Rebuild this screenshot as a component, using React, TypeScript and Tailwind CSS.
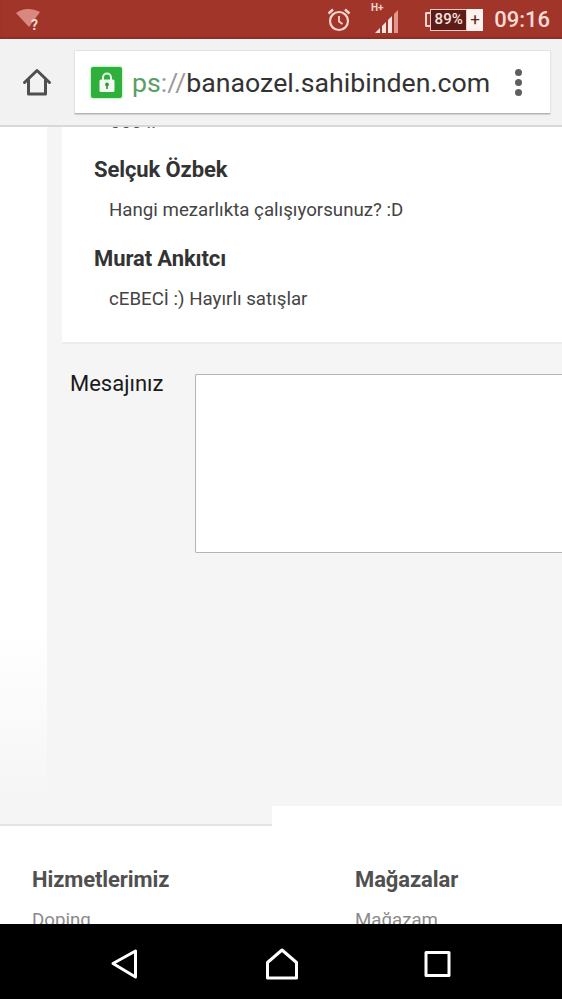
import React from "react";

const font = { fontFamily: "Roboto, sans-serif" };

function Wifi() {
  return (
    <svg width="30" height="24" viewBox="0 0 30 24" className="shrink-0">
      <path d="M2 5 C9 0 18 0 26 4 L15 19 Z" fill="#d98880" />
      <text x="17" y="22" fontSize="14" fontWeight="700" fill="#f8d9d4" fontFamily="Roboto, sans-serif">?</text>
    </svg>
  );
}

function Alarm() {
  return (
    <svg width="26" height="26" viewBox="0 0 26 26" fill="none" stroke="#f9d5cf" strokeWidth="2.2">
      <circle cx="13" cy="14" r="9" />
      <path d="M13 9v5.5l3.5 2.5" strokeWidth="1.8" />
      <path d="M2.5 6.5 7 2.5M23.5 6.5 19 2.5" strokeWidth="2.4" />
    </svg>
  );
}

function Signal() {
  return (
    <svg width="34" height="32" viewBox="0 0 34 32">
      <text x="3" y="9" fontSize="10" fontWeight="700" fill="#f9d5cf" fontFamily="Roboto, sans-serif">H+</text>
      <path d="M7 31 L12 26 V31 Z" fill="#fbe3df" />
      <path d="M14 24 L18 20 V31 H14 Z" fill="#fbe3df" />
      <path d="M20 18 L24 14 V31 H20 Z" fill="#fbe3df" />
      <path d="M26 12 L30 8 V31 H26 Z" fill="#e2978d" />
    </svg>
  );
}

function Battery() {
  return (
    <div className="flex items-center h-[22px]">
      <div className="w-[5px] h-[15px] border-l-2 border-t-2 border-b-2 border-[#f9d5cf] rounded-l-[2px]" />
      <div className="w-[37px] h-[22px] bg-[#5c1d18] border border-[#f3c8c1] flex items-center justify-center text-[15px] font-medium text-[#fbe3df] leading-none">
        89%
      </div>
      <div className="w-[16px] h-[22px] bg-[#fff3f0] flex items-center justify-center text-[17px] text-[#5c1d18] leading-none">+</div>
    </div>
  );
}

function HomeIcon() {
  return (
    <svg width="30" height="30" viewBox="0 0 30 30" fill="none" stroke="#4f4f4f" strokeWidth="3" strokeLinejoin="round" strokeLinecap="round">
      <path d="M2.5 15.5 15 3.5 27.5 15.5" />
      <path d="M6.5 13v14h17V13" />
    </svg>
  );
}

function Lock() {
  return (
    <div className="w-[31px] h-[31px] rounded-[2px] bg-[#2fb03c] shadow-[0_0_3px_#7fdc85] flex items-center justify-center shrink-0">
      <svg width="18" height="22" viewBox="0 0 18 22">
        <path d="M5 9V6.5a4 4 0 0 1 8 0V9" fill="none" stroke="#e8f7e8" strokeWidth="2" />
        <rect x="1.5" y="8.5" width="15" height="12.5" rx="1.5" fill="#f1faf1" />
        <circle cx="9" cy="13.5" r="1.9" fill="#3a8f44" />
        <rect x="8.2" y="14" width="1.6" height="4" fill="#3a8f44" />
      </svg>
    </div>
  );
}

export default function App() {
  return (
    <div className="w-[562px] h-[999px] overflow-hidden flex flex-col bg-white relative" style={font}>
      <div className="h-[39px] shrink-0 bg-[#a2352a] shadow-[inset_0_-2px_2px_#8f2e25] flex items-center pl-[14px] pr-[12px]">
        <Wifi />
        <div className="ml-auto flex items-center">
          <Alarm />
          <div className="ml-[16px] mr-[23px] -mt-[3px]"><Signal /></div>
          <Battery />
          <span className="ml-[11px] text-[22px] font-medium text-[#fbdcd6] leading-none">09:16</span>
        </div>
      </div>

      <div className="h-[88px] shrink-0 bg-[#f2f2f2] border-b-2 border-[#d8d8d8] flex items-center pl-[22px] pr-[11px]">
        <HomeIcon />
        <div className="ml-[22px] flex-1 h-[64px] bg-white rounded-[2px] border border-[#e3e3e3] border-b-[#b5b5b5] shadow-[0_1px_1px_#cfcfcf] flex items-center pl-[16px] pr-[28px]">
          <Lock />
          <span className="ml-[10px] mt-[3px] text-[26.7px] leading-none whitespace-nowrap">
            <span className="text-[#5a9e66]">ps</span>
            <span className="text-[#9a9a9a]">://</span>
            <span className="text-[#333333]">banaozel.sahibinden.com</span>
          </span>
          <div className="ml-auto flex flex-col gap-[3px]">
            <span className="w-[7px] h-[7px] rounded-full bg-[#5f5f5f]" />
            <span className="w-[7px] h-[7px] rounded-full bg-[#5f5f5f]" />
            <span className="w-[7px] h-[7px] rounded-full bg-[#5f5f5f]" />
          </div>
        </div>
      </div>

      <div className="flex-1 min-h-0 flex flex-col">
        <div className="h-[679px] shrink-0 flex">
          <div className="w-[47px] shrink-0 bg-gradient-to-b from-white from-[74%] to-[#f5f5f5]" />
          <div className="flex-1 bg-[#f5f5f5] flex flex-col">
            <div className="ml-[15px] h-[217px] shrink-0 bg-white border-b-2 border-[#ededed] pl-[32px] overflow-hidden">
              <div className="h-[5px] ml-[16px] overflow-hidden text-[18.7px] leading-none text-[#555555] flex items-end">ooo ıı</div>
              <div className="mt-[23px] text-[22px] font-bold text-[#333333] leading-[30px] tracking-[-0.1px]">Selçuk Özbek</div>
              <div className="ml-[15px] mt-[12px] text-[18.7px] text-[#444444] leading-[26px]">Hangi mezarlıkta çalışıyorsunuz? :D</div>
              <div className="mt-[21px] text-[22px] font-bold text-[#333333] leading-[30px] tracking-[-0.1px]">Murat Ankıtcı</div>
              <div className="ml-[15px] mt-[12px] text-[18.7px] text-[#444444] leading-[26px]">cEBECİ :) Hayırlı satışlar</div>
            </div>
            <div className="mt-[30px] flex items-start">
              <label className="ml-[23px] w-[125px] shrink-0 text-[22px] text-[#1a1a1a] leading-[20px]">Mesajınız</label>
              <div className="flex-1 h-[179px] bg-white border border-[#b4b4b4] border-r-0 rounded-l-[2px]" />
            </div>
          </div>
        </div>

        <div className="flex-1 min-h-0 relative bg-white">
          <div className="absolute left-0 top-0 w-[272px] h-[18px] bg-[#f5f5f5] border-b-2 border-[#e4e4e4] box-content" />
          <div className="pt-[61px] flex">
            <div className="w-[355px] pl-[32px]">
              <div className="text-[22px] font-bold text-[#505050] leading-[26px] tracking-[-0.1px]">Hizmetlerimiz</div>
              <div className="mt-[15px] text-[18.7px] text-[#8a8a8a] leading-[24px]">Doping</div>
            </div>
            <div className="flex-1">
              <div className="text-[22px] font-bold text-[#505050] leading-[26px] tracking-[-0.1px]">Mağazalar</div>
              <div className="mt-[15px] text-[18.7px] text-[#8a8a8a] leading-[24px]">Mağazam</div>
            </div>
          </div>
        </div>
      </div>

      <div className="absolute left-0 right-0 bottom-0 h-[75px] bg-black flex items-center text-white">
        <svg className="absolute left-[108px] top-[24px]" width="36" height="32" viewBox="0 0 36 32" fill="none" stroke="white" strokeWidth="3" strokeLinejoin="round">
          <path d="M27.5 3 V29 L5 15.5 Z" />
        </svg>
        <svg className="absolute left-[263px] top-[24px]" width="38" height="34" viewBox="0 0 38 34" fill="none" stroke="white" strokeWidth="3" strokeLinejoin="round">
          <path d="M19 2 L33.5 14.5 V30 H4.5 V14.5 Z" />
        </svg>
        <svg className="absolute left-[423px] top-[26px]" width="28" height="28" viewBox="0 0 28 28" fill="none" stroke="white" strokeWidth="3" strokeLinejoin="round">
          <rect x="3" y="2.5" width="23" height="23" />
        </svg>
      </div>
    </div>
  );
}
